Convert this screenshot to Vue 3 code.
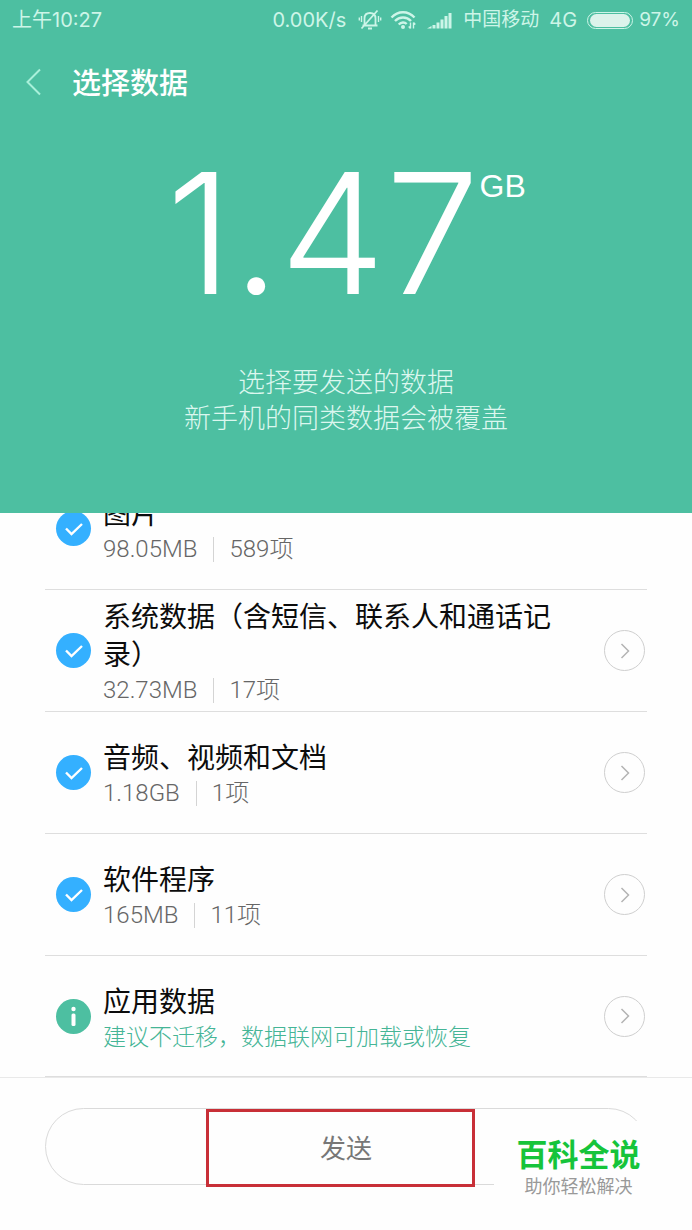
<script setup>
import { ref } from 'vue'

const rows = ref([
  { id: 'photos', title: '图片', size: '98.05MB', count: '589项', checked: true, more: false },
  { id: 'system', title: '系统数据（含短信、联系人和通话记录）', size: '32.73MB', count: '17项', checked: true, more: true },
  { id: 'media', title: '音频、视频和文档', size: '1.18GB', count: '1项', checked: true, more: true },
  { id: 'apps', title: '软件程序', size: '165MB', count: '11项', checked: true, more: true },
  { id: 'appdata', title: '应用数据', note: '建议不迁移，数据联网可加载或恢复', more: true }
])
</script>

<template>
  <div class="screen">
    <header class="hero">
      <div class="status">
        <span class="clock">上午10:27</span>
        <span class="speed">0.00K/s</span>
        <svg class="bell" width="24" height="22" viewBox="0 0 24 22" fill="none" stroke="currentColor" stroke-width="1.8">
          <path d="M4.500 16.500h15M6.500 16V9.500C6.500 6 8.500 4 12 4s5.500 2 5.500 5.500V16M10 19.500h4M19.500 1.500 3.500 19.500" />
          <path d="M3.500 7v6M1.300 8.500v3M20.500 7v6M22.700 8.500v3" stroke-width="1.4" />
        </svg>
        <svg class="wifi" width="27" height="20" viewBox="0 0 27 20" fill="none" stroke="currentColor" stroke-width="2.4">
          <path d="M1.500 7.500C8 .5 18 .5 24.500 7.500M5 11c4.500-4.700 11.500-4.700 16 0M8.700 14.500c2.500-2.500 6-2.500 8-.5" />
          <circle cx="13" cy="17" r="2" fill="currentColor" stroke="none" />
          <path d="M20.500 12.500v6M18.700 16.500l1.800 2M23.500 18.500v-6M25.300 14.500l-1.800-2" stroke-width="1.4" />
        </svg>
        <svg class="signal" width="25" height="17" viewBox="0 0 25 17" fill="currentColor">
          <path d="M0 16.500 4.500 14v2.500zM5.500 13h3v3.500h-3zM9.500 10.500h3v6h-3zM13.500 7.500h3v9h-3zM17.500 4h3v12.500h-3zM21.500 1h3v15.500h-3z" />
        </svg>
        <span class="carrier">中国移动</span>
        <span class="network">4G</span>
        <span class="battery"><span class="charge"></span></span>
        <span class="percent">97%</span>
      </div>
      <div class="titlebar">
        <button class="back" type="button" aria-label="返回">
          <svg width="16" height="28" viewBox="0 0 16 28" fill="none" stroke="currentColor" stroke-width="2">
            <path d="M15 1.500 2.500 14 15 26.500" />
          </svg>
        </button>
        <h1>选择数据</h1>
      </div>
      <div class="total"><span class="amount">1.47</span><span class="unit">GB</span></div>
      <p class="hint">选择要发送的数据<br>新手机的同类数据会被覆盖</p>
    </header>

    <main class="list">
      <section v-for="row in rows" :key="row.id" class="row">
        <span v-if="!row.note" class="tick">
          <input :id="row.id" v-model="row.checked" type="checkbox">
          <svg width="35" height="35" viewBox="0 0 35 35" fill="none" stroke="#fff" stroke-width="2.4">
            <path d="M10 17.500 15.500 23 26 13" />
          </svg>
        </span>
        <svg v-else class="info" width="35" height="35" viewBox="0 0 35 35">
          <circle cx="17.500" cy="17.500" r="17.500" fill="#4dbfa1" />
          <circle cx="17.500" cy="10" r="2.200" fill="#fff" />
          <rect x="15.500" y="14.500" width="4" height="12.500" rx="1.500" fill="#fff" />
        </svg>
        <div class="text">
          <label v-if="!row.note" class="name" :for="row.id">{{ row.title }}</label>
          <span v-else class="name">{{ row.title }}</span>
          <span v-if="row.note" class="note">{{ row.note }}</span>
          <span v-else class="meta"><span>{{ row.size }}</span><span class="bar"></span><span>{{ row.count }}</span></span>
        </div>
        <button v-if="row.more" class="more" type="button" :aria-label="row.title">
          <svg width="10" height="16" viewBox="0 0 10 16" fill="none" stroke="currentColor" stroke-width="1.5">
            <path d="M1.500 1 8.500 8l-7 7" />
          </svg>
        </button>
      </section>
    </main>

    <footer class="footer">
      <div class="action">
        <button class="send" type="button">发送</button>
        <span class="marker"></span>
      </div>
      <div class="brand">
        <strong>百科全说</strong>
        <span>助你轻松解决</span>
      </div>
    </footer>
  </div>
</template>

<style>
body {
  background: #fff;
}
</style>

<style scoped>
.screen {
  display: flex;
  flex-direction: column;
  height: 100vh;
  overflow: hidden;
  font-family: Roboto, "Noto Sans CJK SC", sans-serif;
  background: #fefefe;
}
button {
  padding: 0;
  border: 0;
  background: none;
  font: inherit;
}
svg {
  display: block;
  flex: none;
}
.hero {
  flex: none;
  padding-bottom: 76px;
  background: #4dbfa1;
  color: #fff;
}
.status {
  display: flex;
  align-items: center;
  height: 40px;
  padding: 0 12px;
  color: #cdf5e8;
  font: 20px/40px Inter, "Noto Sans CJK SC", sans-serif;
  white-space: nowrap;
}
.clock {
  margin-right: auto;
}
.bell {
  margin-left: 12px;
}
.wifi {
  margin-left: 8px;
}
.signal {
  margin-left: 10px;
}
.carrier {
  margin-left: 11px;
  font-size: 19px;
}
.network {
  margin: 0 10px;
}
.battery {
  box-sizing: border-box;
  width: 46px;
  height: 17px;
  margin-right: 6px;
  padding: 1px 2px;
  border: 1px solid currentColor;
  border-radius: 9px;
}
.charge {
  display: block;
  height: 13px;
  border-radius: 7px;
  background: #dcf3eb;
}
.percent {
  font-size: 19px;
}
.titlebar {
  display: flex;
  align-items: center;
  height: 84px;
  padding-left: 25px;
}
.back {
  width: 47px;
  color: #a9f0da;
}
h1 {
  margin: 0;
  padding-top: 4px;
  font-size: 29px;
  font-weight: 500;
  line-height: 40px;
}
.total {
  display: flex;
  justify-content: center;
  align-items: flex-start;
  height: 241px;
}
.amount {
  font: 350 168px/218px Inter, sans-serif;
}
.unit {
  margin-top: 42px;
  font: 32px/40px "Liberation Sans", Arial, sans-serif;
}
.hint {
  margin: 0;
  color: #dcf7ef;
  font-size: 27px;
  font-weight: 300;
  line-height: 36px;
  text-align: center;
}
.list {
  display: flex;
  flex: 1;
  flex-direction: column;
  justify-content: flex-end;
  min-height: 0;
  margin: 0 45px;
  overflow: hidden;
}
.row {
  display: flex;
  flex: none;
  align-items: center;
  box-sizing: border-box;
  min-height: 122px;
  padding: 0 2px 0 11px;
  border-bottom: 1px solid #dedede;
}
.row:last-child {
  min-height: 121px;
}
.tick {
  position: relative;
  flex: none;
  width: 35px;
  height: 35px;
}
.tick input {
  display: block;
  width: 35px;
  height: 35px;
  margin: 0;
  border-radius: 50%;
  background: #ddd;
  appearance: none;
}
.tick input:checked {
  background: #34b0ff;
}
.tick svg {
  position: absolute;
  inset: 0;
  pointer-events: none;
}
.text {
  display: flex;
  flex: 1;
  flex-direction: column;
  margin: 0 30px 0 12px;
  padding-top: 4px;
}
.name {
  color: #0c0c0c;
  font-size: 28px;
  line-height: 38px;
}
.meta,
.note {
  display: flex;
  align-items: center;
  height: 31px;
  color: #666;
  font-size: 24px;
  font-weight: 300;
  line-height: 31px;
}
.note {
  color: #45b596;
  font-size: 23px;
}
.bar {
  width: 1px;
  height: 25px;
  margin: 0 15px 0 16px;
  background: #d4d4d4;
}
.more {
  display: flex;
  flex: none;
  align-items: center;
  justify-content: center;
  box-sizing: border-box;
  width: 41px;
  height: 41px;
  border: 1px solid #cfcfcf;
  border-radius: 50%;
  color: #b4b4b4;
}
.footer {
  position: relative;
  flex: none;
  padding: 30px 45px 45px;
  border-top: 1px solid #e9e9e9;
}
.action {
  position: relative;
}
.send {
  display: block;
  width: 100%;
  height: 77px;
  border: 1px solid #dadada;
  border-radius: 39px;
  color: #777;
  font-size: 26px;
}
.marker {
  position: absolute;
  top: 1px;
  left: calc(50% - 140px);
  box-sizing: border-box;
  width: 269px;
  height: 78px;
  border: 3px solid #c82f37;
  pointer-events: none;
}
.brand {
  position: absolute;
  right: 24px;
  bottom: 24px;
  display: flex;
  flex-direction: column;
  align-items: center;
  box-sizing: border-box;
  width: 174px;
  height: 85px;
  padding-top: 16px;
  padding-right: 5px;
  border-radius: 8px;
  background: #fefefe;
  color: #999;
  font-size: 18px;
  line-height: 24px;
}
.brand strong {
  color: #16c43a;
  font-size: 31px;
  font-weight: 700;
  line-height: 38px;
}
</style>
